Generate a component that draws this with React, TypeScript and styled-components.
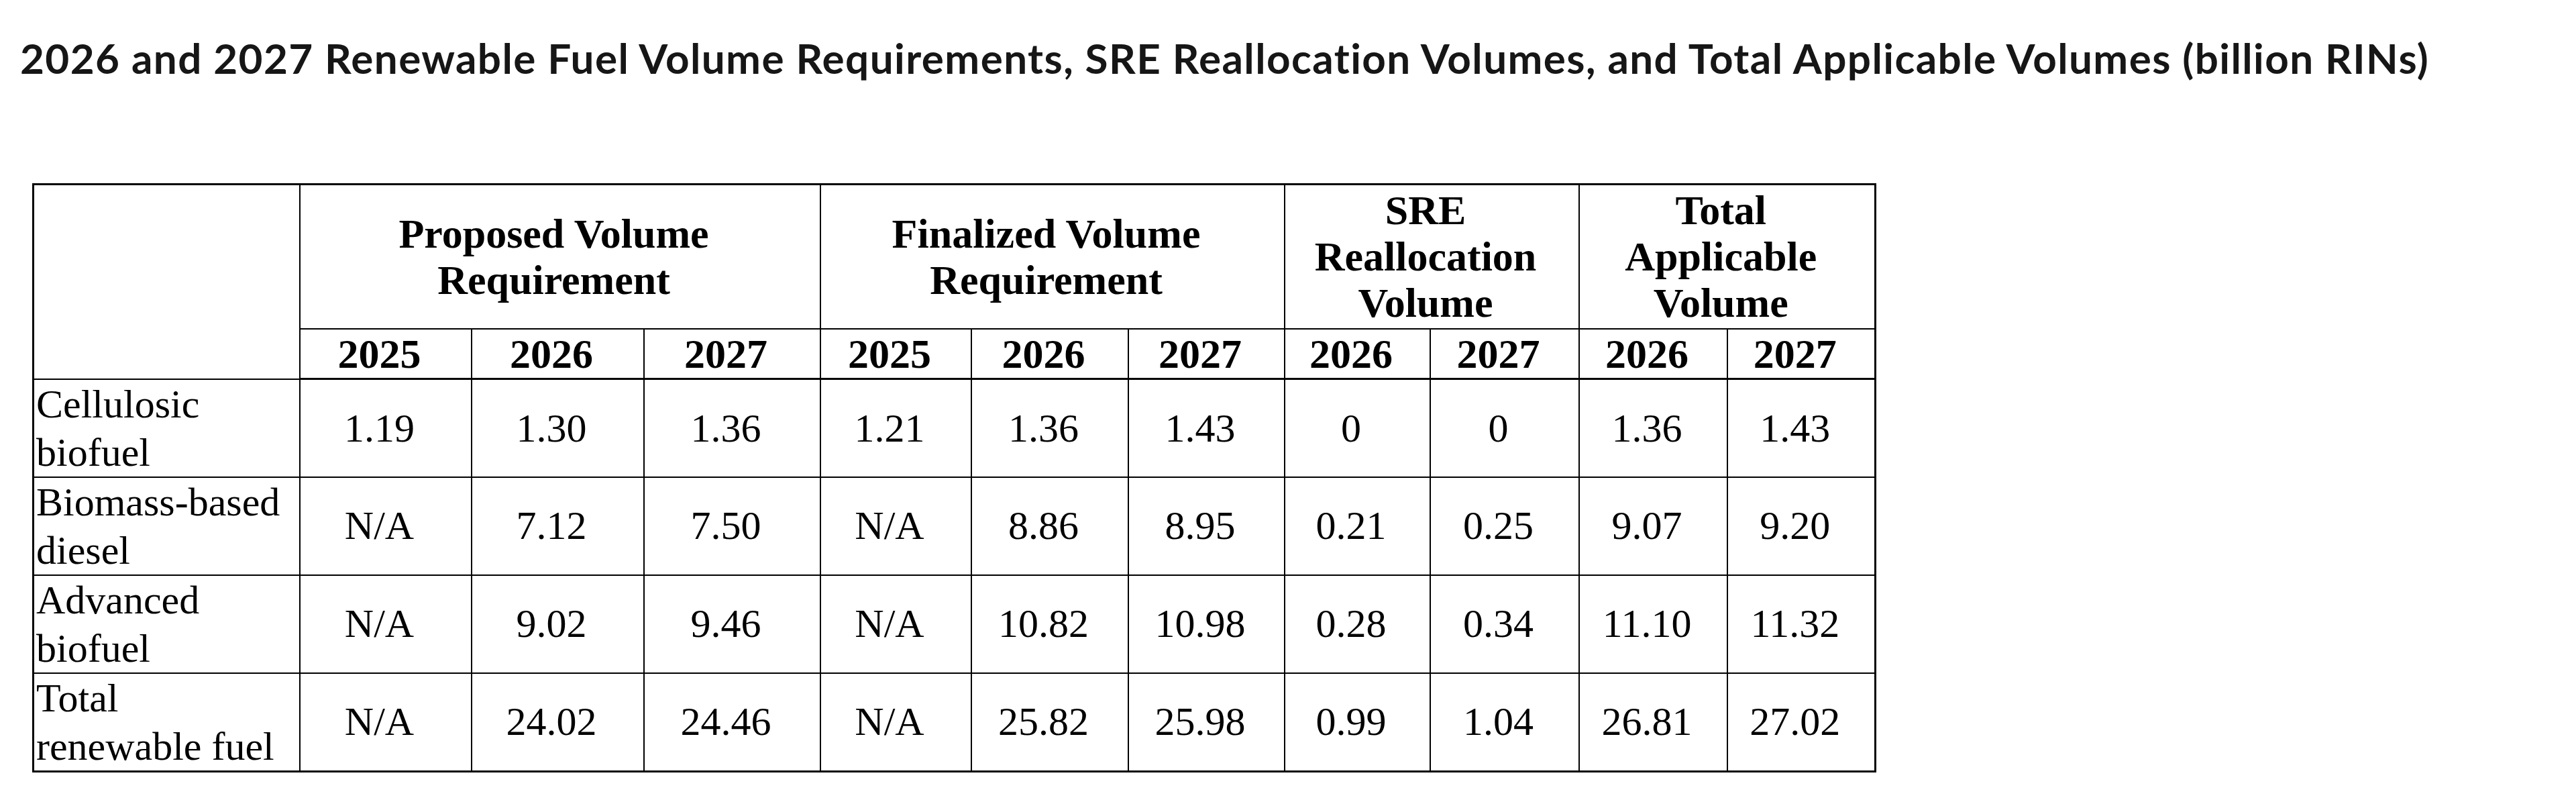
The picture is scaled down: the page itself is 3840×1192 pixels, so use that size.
import React from 'react'
import styled, { createGlobalStyle } from 'styled-components'

const GlobalStyle = createGlobalStyle`
  html, body {
    margin: 0;
    padding: 0;
    background: #ffffff;
  }
`

const groups = [
  { lines: ['Proposed Volume', 'Requirement'], span: 3 },
  { lines: ['Finalized Volume', 'Requirement'], span: 3 },
  { lines: ['SRE', 'Reallocation', 'Volume'], span: 2 },
  { lines: ['Total', 'Applicable', 'Volume'], span: 2 },
]

const years = ['2025', '2026', '2027', '2025', '2026', '2027', '2026', '2027', '2026', '2027']

const colWidths = [397, 256, 257, 263, 225, 234, 233, 217, 222, 221, 221]

const rows = [
  { label: ['Cellulosic', 'biofuel'], values: ['1.19', '1.30', '1.36', '1.21', '1.36', '1.43', '0', '0', '1.36', '1.43'] },
  { label: ['Biomass-based', 'diesel'], values: ['N/A', '7.12', '7.50', 'N/A', '8.86', '8.95', '0.21', '0.25', '9.07', '9.20'] },
  { label: ['Advanced', 'biofuel'], values: ['N/A', '9.02', '9.46', 'N/A', '10.82', '10.98', '0.28', '0.34', '11.10', '11.32'] },
  { label: ['Total', 'renewable fuel'], values: ['N/A', '24.02', '24.46', 'N/A', '25.82', '25.98', '0.99', '1.04', '26.81', '27.02'] },
]

const App = () => {
  return (
    <Page>
      <GlobalStyle />
      <Title>
        2026 and 2027 Renewable Fuel Volume Requirements, SRE Reallocation Volumes, and Total Applicable Volumes (billion RINs)
      </Title>
      <Table>
        <colgroup>
          {colWidths.map((w, i) => (
            <col key={i} style={{ width: w }} />
          ))}
        </colgroup>
        <thead>
          <GroupRow>
            <Corner rowSpan={2} />
            {groups.map((g, i) => (
              <GroupHead key={i} colSpan={g.span}>
                {g.lines.map((l, j) => (
                  <React.Fragment key={j}>
                    {j > 0 && <br />}
                    {l}
                  </React.Fragment>
                ))}
              </GroupHead>
            ))}
          </GroupRow>
          <YearRow>
            {years.map((y, i) => (
              <YearHead key={i}>{y}</YearHead>
            ))}
          </YearRow>
        </thead>
        <tbody>
          {rows.map((r, i) => (
            <DataRow key={i}>
              <Label>
                {r.label[0]}
                <br />
                {r.label[1]}
              </Label>
              {r.values.map((v, j) => (
                <Value key={j}>{v}</Value>
              ))}
            </DataRow>
          ))}
        </tbody>
      </Table>
    </Page>
  )
}

export default App

const Page = styled.div`
  padding: 49px 0 0 30px;
  color: #111111;
`

const Title = styled.h2`
  margin: 0 0 150px 0;
  font-family: Lato, 'Liberation Sans', sans-serif;
  font-weight: 700;
  font-size: 62px;
  letter-spacing: 1.4px;
  line-height: 1.2;
  color: #161616;
  white-space: nowrap;
`

const Table = styled.table`
  margin-left: 18px;
  width: 2746px;
  table-layout: fixed;
  border-collapse: collapse;
  border: 3px solid #000;
  font-family: 'Liberation Serif', 'Times New Roman', serif;
  color: #000;
`

const GroupRow = styled.tr`
  height: 215px;
`

const YearRow = styled.tr`
  height: 75px;
`

const DataRow = styled.tr`
  height: 146px;
`

const Cell = styled.td`
  border: 2px solid #000;
  padding: 0 18px 0 0;
  vertical-align: middle;
`

const Corner = styled(Cell).attrs({ as: 'th' })``

const GroupHead = styled(Cell).attrs({ as: 'th' })`
  font-size: 62px;
  font-weight: 700;
  line-height: 69px;
  text-align: center;
`

const YearHead = styled(Cell).attrs({ as: 'th' })`
  font-size: 62px;
  font-weight: 700;
  line-height: 70px;
  text-align: center;
  border-bottom-width: 3px;
`

const Label = styled(Cell)`
  font-size: 60px;
  line-height: 72px;
  text-align: left;
  padding: 0 0 0 3px;
  white-space: nowrap;
`

const Value = styled(Cell)`
  font-size: 60px;
  text-align: center;
`
